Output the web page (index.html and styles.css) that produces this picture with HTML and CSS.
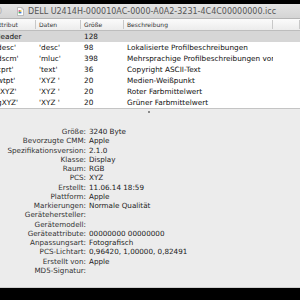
FILE: index.html
```html
<!DOCTYPE html>
<html lang="de">
<head>
<meta charset="utf-8">
<title>ICC-Profil</title>
<link rel="stylesheet" href="styles.css">
</head>
<body>
<div class="screen">
  <div class="blackbar"></div>
  <div class="titlebar">
    <span class="ghost">0</span>
    <svg class="doc-icon" width="7" height="9" viewBox="0 0 7 9">
      <path d="M0.5 0.5 H4.8 L6.5 2.2 V8.5 H0.5 Z" fill="#ffffff" stroke="#9a9a9a" stroke-width="0.6"/>
      <path d="M4.8 0.5 V2.2 H6.5" fill="none" stroke="#9a9a9a" stroke-width="0.5"/>
      <rect x="1.6" y="3.2" width="1.4" height="1.6" fill="#e0417a"/>
      <rect x="3" y="3.2" width="1.4" height="1.6" fill="#f2c12e"/>
      <rect x="1.6" y="4.8" width="1.4" height="1.6" fill="#3fae5a"/>
      <rect x="3" y="4.8" width="1.4" height="1.6" fill="#3b7de0"/>
    </svg>
    <span class="title">DELL U2414H-000010AC-0000-A0A2-3231-4C4C00000000.icc</span>
  </div>

  <div class="table">
    <div class="row thead">
      <div class="cell c1">Attribut</div>
      <div class="cell">Daten</div>
      <div class="cell">Größe</div>
      <div class="cell">Beschreibung</div>
      <div class="cell"></div>
    </div>
    <div class="row group">
      <div class="cell c1">Header</div>
      <div class="cell"></div>
      <div class="cell">128</div>
      <div class="cell"></div>
      <div class="cell"></div>
    </div>
    <div class="row">
      <div class="cell c1">'desc'</div>
      <div class="cell">'desc'</div>
      <div class="cell">98</div>
      <div class="cell">Lokalisierte Profilbeschreibungen</div>
      <div class="cell"></div>
    </div>
    <div class="row">
      <div class="cell c1">'dscm'</div>
      <div class="cell">'mluc'</div>
      <div class="cell">398</div>
      <div class="cell">Mehrsprachige Profilbeschreibungen von</div>
      <div class="cell"></div>
    </div>
    <div class="row">
      <div class="cell c1">'cprt'</div>
      <div class="cell">'text'</div>
      <div class="cell">36</div>
      <div class="cell">Copyright ASCII-Text</div>
      <div class="cell"></div>
    </div>
    <div class="row">
      <div class="cell c1">'wtpt'</div>
      <div class="cell">'XYZ '</div>
      <div class="cell">20</div>
      <div class="cell">Medien-Weißpunkt</div>
      <div class="cell"></div>
    </div>
    <div class="row">
      <div class="cell c1">'rXYZ'</div>
      <div class="cell">'XYZ '</div>
      <div class="cell">20</div>
      <div class="cell">Roter Farbmittelwert</div>
      <div class="cell"></div>
    </div>
    <div class="row">
      <div class="cell c1">'gXYZ'</div>
      <div class="cell">'XYZ '</div>
      <div class="cell">20</div>
      <div class="cell">Grüner Farbmittelwert</div>
      <div class="cell"></div>
    </div>
  </div>

  <div class="details">
    <div class="grip"></div>
    <dl class="info">
      <dt>Größe:</dt><dd>3240 Byte</dd>
      <dt>Bevorzugte CMM:</dt><dd>Apple</dd>
      <dt>Spezifikationsversion:</dt><dd>2.1.0</dd>
      <dt>Klasse:</dt><dd>Display</dd>
      <dt>Raum:</dt><dd>RGB</dd>
      <dt>PCS:</dt><dd>XYZ</dd>
      <dt>Erstellt:</dt><dd>11.06.14 18:59</dd>
      <dt>Plattform:</dt><dd>Apple</dd>
      <dt>Markierungen:</dt><dd>Normale Qualität</dd>
      <dt>Gerätehersteller:</dt><dd></dd>
      <dt>Gerätemodell:</dt><dd></dd>
      <dt>Geräteattribute:</dt><dd>00000000 00000000</dd>
      <dt>Anpassungsart:</dt><dd>Fotografisch</dd>
      <dt>PCS-Lichtart:</dt><dd>0,96420, 1,00000, 0,82491</dd>
      <dt>Erstellt von:</dt><dd>Apple</dd>
      <dt>MD5-Signatur:</dt><dd></dd>
    </dl>
  </div>
  <div class="blackbar bottom"></div>
</div>
</body>
</html>
```

FILE: styles.css
```css
html, body {
  margin: 0;
  padding: 0;
  background: #000;
}

.screen {
  width: 300px;
  height: 300px;
  overflow: hidden;
  display: flex;
  flex-direction: column;
  font-family: "DejaVu Sans", sans-serif;
  color: #111;
  background: #ececec;
}

.blackbar {
  height: 4px;
  background: #000;
  flex: none;
}

.blackbar.bottom {
  height: 12px;
}

.titlebar {
  height: 15px;
  flex: none;
  display: flex;
  align-items: center;
  background: linear-gradient(#e4e4e4, #d4d4d4);
  box-sizing: border-box;
  border-bottom: 1px solid #b4b4b4;
  font-size: 8px;
  color: #555;
  white-space: nowrap;
}

.ghost {
  margin-left: -3px;
  color: #b0b0b0;
  width: 20px;
}

.doc-icon {
  display: block;
  margin-right: 4px;
}

.title {
  letter-spacing: 0;
}

.table {
  flex: none;
  background: #fff;
  border-bottom: 1px solid #c4c4c4;
}

.row {
  display: grid;
  grid-template-columns: 36px 45px 43px 149px 1fr;
  height: 11px;
  align-items: center;
  font-size: 7.3px;
  white-space: nowrap;
}

.cell {
  overflow: hidden;
  padding-left: 3px;
  line-height: 11px;
}

.cell.c1 {
  padding-left: 0;
  text-indent: -5px;
}

.thead {
  height: 12px;
  box-sizing: border-box;
  border-bottom: 1px solid #bdbdbd;
  background: linear-gradient(#fbfbfb, #ececec);
  font-size: 6px;
  color: #333;
}

.thead .cell {
  line-height: 11px;
  border-right: 1px solid #c8c8c8;
  height: 9px;
  line-height: 9px;
}

.group {
  background: #d6d6d6;
}

.details {
  flex: 1;
  border-bottom: 1px solid #cfcfcf;
  display: flex;
  flex-direction: column;
}

.grip {
  width: 2px;
  height: 2px;
  margin: 2px 0 0 148px;
  background: #8a8a8a;
}

.info {
  margin: 14px 0 0 0;
  display: grid;
  grid-template-columns: 86px 1fr;
  column-gap: 3px;
  grid-auto-rows: 9.27px;
  font-size: 7.2px;
  line-height: 9.27px;
  white-space: nowrap;
}

.info dt {
  text-align: right;
  color: #333;
}

.info dd {
  margin: 0;
  color: #1a1a1a;
}
```
